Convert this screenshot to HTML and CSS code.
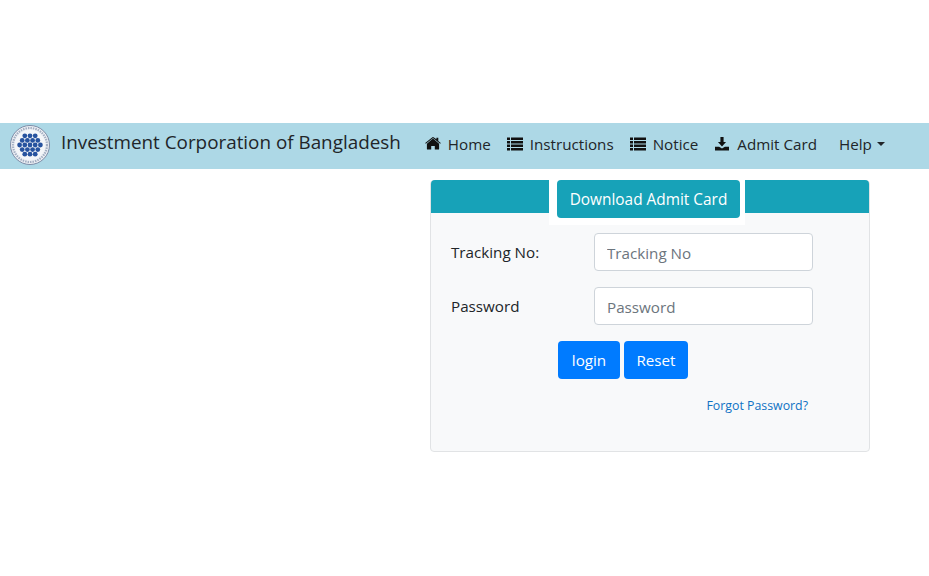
FILE: index.html
```html
<!doctype html>
<html lang="en">
<head>
    <meta charset="UTF-8">
    <meta name="viewport" content="width=device-width, initial-scale=1.0">
    <title>Investment Corporation of Bangladesh</title>
    <link rel="stylesheet" href="styles.css">
</head>
<body>
    <nav class="navbar">
        <a class="brand" href="#">
            <svg class="logo" viewBox="0 0 40 40" aria-hidden="true">
                <circle cx="20" cy="20" r="19.5" fill="#eef1f5" stroke="#7d8ba6" stroke-width="1"/>
                <circle cx="20" cy="20" r="17" fill="none" stroke="#a3aec2" stroke-width="2.2" stroke-dasharray="1.5 1"/>
                <circle cx="20" cy="20" r="15" fill="#f4f6f9"/>
                <g fill="#27539f">
                    <circle cx="14.8" cy="10.8" r="2.4"/><circle cx="20" cy="10.8" r="2.4"/><circle cx="25.2" cy="10.8" r="2.4"/>
                    <circle cx="12.2" cy="15.4" r="2.4"/><circle cx="17.4" cy="15.4" r="2.4"/><circle cx="22.6" cy="15.4" r="2.4"/><circle cx="27.8" cy="15.4" r="2.4"/>
                    <circle cx="9.6" cy="20" r="2.4"/><circle cx="14.8" cy="20" r="2.4"/><circle cx="20" cy="20" r="2.4"/><circle cx="25.2" cy="20" r="2.4"/><circle cx="30.4" cy="20" r="2.4"/>
                    <circle cx="12.2" cy="24.6" r="2.4"/><circle cx="17.4" cy="24.6" r="2.4"/><circle cx="22.6" cy="24.6" r="2.4"/><circle cx="27.8" cy="24.6" r="2.4"/>
                    <circle cx="14.8" cy="29.2" r="2.4"/><circle cx="20" cy="29.2" r="2.4"/><circle cx="25.2" cy="29.2" r="2.4"/>
                </g>
            </svg>
            <span>Investment Corporation of Bangladesh</span>
        </a>
        <ul class="nav-links">
            <li><a href="#">
                <svg class="icon" viewBox="0 0 16 14"><path d="M8 1.6 1.9 6.7V12a.6.6 0 0 0 .6.6h3.7V8.9h3.6v3.7h3.7a.6.6 0 0 0 .6-.6V6.7L8 1.6ZM15.8 6 13.3 3.9V.8h-1.9v1.5L8.9.5a1.4 1.4 0 0 0-1.8 0L.2 6l.6.8L8 .9l7.2 5.9.6-.8Z"/></svg>
                Home</a></li>
            <li><a href="#">
                <svg class="icon" viewBox="0 0 16 14"><path d="M0 .5h3v2.6H0zM4 .5h12v2.6H4zM0 4h3v2.6H0zM4 4h12v2.6H4zM0 7.5h3v2.6H0zM4 7.5h12v2.6H4zM0 11h3v2.6H0zM4 11h12v2.6H4z"/></svg>
                Instructions</a></li>
            <li><a href="#">
                <svg class="icon" viewBox="0 0 16 14"><path d="M0 .5h3v2.6H0zM4 .5h12v2.6H4zM0 4h3v2.6H0zM4 4h12v2.6H4zM0 7.5h3v2.6H0zM4 7.5h12v2.6H4zM0 11h3v2.6H0zM4 11h12v2.6H4z"/></svg>
                Notice</a></li>
            <li><a href="#">
                <svg class="icon" viewBox="0 0 16 16"><path d="M6.2 0h3.6v5.6h2.8L8 10.8 3.4 5.6h2.8V0ZM0 11h4.7L8 13l3.3-2H16v4.4H0V11Z"/></svg>
                Admit Card</a></li>
            <li class="dropdown"><a href="#">Help<span class="caret"></span></a></li>
        </ul>
    </nav>

    <main class="content">
        <section class="card">
            <header class="card-header">
                <div class="title-box">
                    <h1 class="card-title">Download Admit Card</h1>
                </div>
            </header>
            <form class="card-body">
                <div class="form-row">
                    <label for="tracking">Tracking No:</label>
                    <input id="tracking" type="text" placeholder="Tracking No">
                </div>
                <div class="form-row">
                    <label for="password">Password</label>
                    <input id="password" type="password" placeholder="Password">
                </div>
                <div class="actions">
                    <button class="btn-login" type="button">login</button>
                    <button class="btn-reset" type="reset">Reset</button>
                </div>
                <a class="forgot" href="#">Forgot Password?</a>
            </form>
        </section>
    </main>
</body>
</html>
```

FILE: styles.css
```css
* {
    margin: 0;
    padding: 0;
    box-sizing: border-box;
}
body {
    font-family: "Open Sans", "Noto Sans", sans-serif;
    font-size: 15.2px;
    color: #212529;
    background-color: #fff;
    padding-top: 123px;
}
a {
    color: inherit;
    text-decoration: none;
}
.navbar {
    display: flex;
    align-items: center;
    height: 46px;
    padding-left: 10px;
    background-color: #add8e6;
}
.brand {
    display: flex;
    align-items: center;
    gap: 11px;
    font-size: 18.85px;
    margin-top: -3px;
    margin-right: 24px;
}
.brand span {
    margin-top: -6px;
}
.logo {
    width: 40px;
    height: 40px;
}
.nav-links {
    display: flex;
    list-style: none;
    gap: 16px;
    margin-bottom: 4px;
}
.nav-links a {
    display: flex;
    align-items: center;
    gap: 7px;
}
.icon {
    width: 16px;
    height: 14px;
    fill: #111;
}
.dropdown {
    margin-left: 6px;
}
.dropdown a {
    gap: 5px;
}
.caret {
    border-top: 4px solid #212529;
    border-left: 4px solid transparent;
    border-right: 4px solid transparent;
}
.content {
    padding: 11px 59px 0 430px;
}
.card {
    height: 272px;
    background-color: #f8f9fa;
    border: 1px solid #e1e3e5;
    border-radius: 4px;
}
.card-header {
    display: flex;
    justify-content: center;
    height: 33px;
    margin-top: -1px;
    padding-right: 6px;
    background-color: #17a2b8;
    border-radius: 4px 4px 0 0;
}
.title-box {
    height: 45px;
    padding: 0 5px 7px 8px;
    background-color: #fff;
}
.card-title {
    height: 38px;
    padding: 0 13px;
    font-size: 15.4px;
    font-weight: 400;
    line-height: 39px;
    color: #fff;
    background-color: #17a2b8;
    border-radius: 4px;
}
.card-body {
    padding: 20px 56px 0 20px;
}
.form-row {
    display: flex;
    align-items: center;
    margin-bottom: 16px;
}
.form-row label {
    width: 143px;
}
.form-row input {
    width: 219px;
    height: 38px;
    padding: 1px 12px 0;
    font: inherit;
    color: #495057;
    background-color: #fff;
    border: 1px solid #ced4da;
    border-radius: 4px;
}
.form-row input::placeholder {
    color: #6c757d;
}
.actions {
    display: flex;
    justify-content: center;
    gap: 4px;
    padding-right: 18px;
}
.actions button {
    height: 38px;
    font: inherit;
    color: #fff;
    background-color: #007bff;
    border: none;
    border-radius: 4px;
}
.btn-login {
    width: 62px;
}
.btn-reset {
    width: 64px;
}
.forgot {
    display: block;
    margin-top: 18px;
    margin-right: 5px;
    text-align: right;
    font-size: 12.35px;
    color: #0f72c4;
}
```
